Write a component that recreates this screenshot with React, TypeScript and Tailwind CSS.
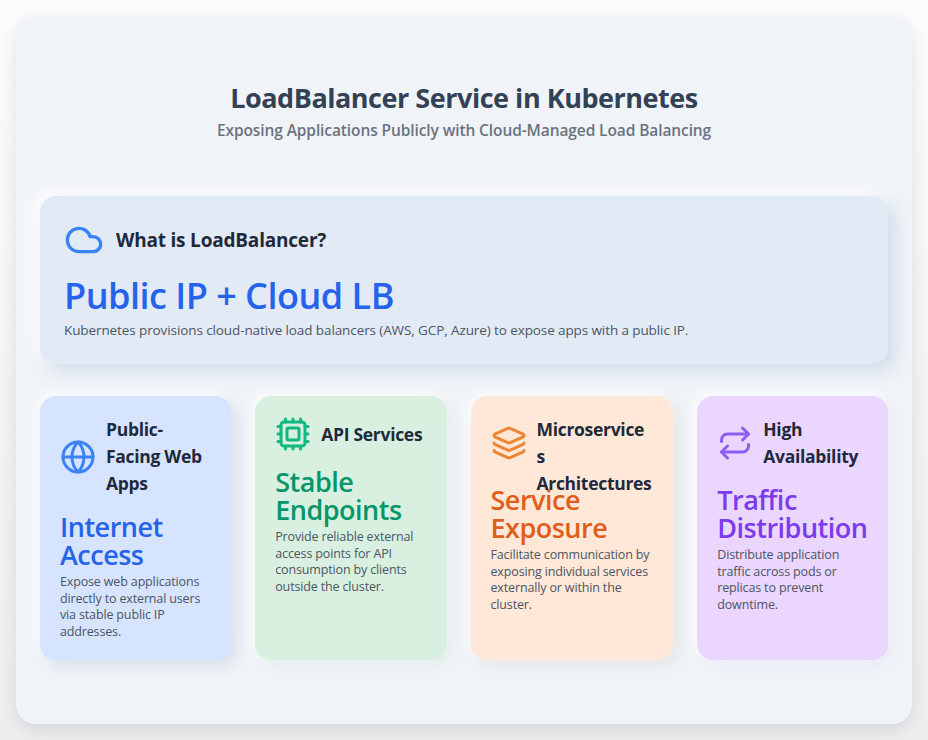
import { Cloud, Cpu, Globe, Layers, Repeat } from "lucide-react";

const cards = [
  {
    icon: <Globe className="h-9 w-9 shrink-0 text-[#3b82f6]" />,
    heading: <>Public-Facing Web Apps</>,
    title: "Internet Access",
    text: "Expose web applications directly to external users via stable public IP addresses.",
    card: "bg-[#d6e4ff] shadow-[6px_6px_14px_rgba(100,130,180,0.18),-4px_-4px_12px_rgba(255,255,255,0.7)]",
    titleColor: "text-[#2563eb]",
    header: "",
    headingAlign: "",
  },
  {
    icon: <Cpu className="h-9 w-9 shrink-0 text-[#10b981]" />,
    heading: <>API Services</>,
    title: "Stable Endpoints",
    text: "Provide reliable external access points for API consumption by clients outside the cluster.",
    card: "bg-[#d9f0e0] shadow-[6px_6px_14px_rgba(120,170,140,0.08),-4px_-4px_12px_rgba(255,255,255,0.7)]",
    titleColor: "text-[#059669]",
    header: "",
    headingAlign: "",
  },
  {
    icon: <Layers className="h-9 w-9 shrink-0 text-[#ee8533]" />,
    heading: (
      <>
        Microservice
        <br />s
        <br />
        Architectures
      </>
    ),
    title: "Service Exposure",
    text: "Facilitate communication by exposing individual services externally or within the cluster.",
    card: "bg-[#ffe8d7] shadow-[6px_6px_14px_rgba(170,140,120,0.12),-4px_-4px_12px_rgba(255,255,255,0.7)]",
    titleColor: "text-[#e05d1c]",
    header: "h-[54px]",
    headingAlign: "self-start",
  },
  {
    icon: <Repeat className="h-9 w-9 shrink-0 text-[#8b5cf6]" />,
    heading: <>High Availability</>,
    title: "Traffic Distribution",
    text: "Distribute application traffic across pods or replicas to prevent downtime.",
    card: "bg-[#ead6ff] shadow-[6px_6px_14px_rgba(150,120,190,0.06),-4px_-4px_12px_rgba(255,255,255,0.7)]",
    titleColor: "text-[#7c3aed]",
    header: "",
    headingAlign: "",
  },
];

export default function App() {
  return (
    <div className="h-[740px] overflow-hidden bg-gradient-to-b from-[#fefbfc] to-[#edeeef] p-4 font-['Open_Sans','Noto_Sans',sans-serif]">
      <div className="h-[708px] rounded-[20px] bg-[#f0f4f8] px-6 pt-[64px] shadow-[0_6px_18px_rgba(0,0,0,0.1)]">
        <div className="text-center">
          <h1 className="text-[27px] leading-[36px] font-bold tracking-[-0.47px] text-[#334155]">
            LoadBalancer Service in Kubernetes
          </h1>
          <p className="mt-0.5 text-[15.5px] leading-[24px] font-semibold tracking-[-0.1px] text-[#6b7280]">
            Exposing Applications Publicly with Cloud-Managed Load Balancing
          </p>
        </div>

        <div className="mt-[54px] h-[168px] rounded-2xl bg-[#e2eaf6] px-6 pt-6 shadow-[8px_8px_16px_rgba(160,180,205,0.35),-8px_-8px_16px_rgba(255,255,255,0.75)]">
          <div className="flex items-center gap-3">
            <Cloud className="h-10 w-10 shrink-0 text-[#3b82f6]" />
            <h2 className="text-[19px] font-bold tracking-[-0.2px] text-[#1e293b]">What is LoadBalancer?</h2>
          </div>
          <div className="mt-[14px] text-[36px] leading-[44px] font-semibold tracking-[-0.5px] text-[#2563eb]">
            Public IP + Cloud LB
          </div>
          <p className="mt-[2px] text-[13.5px] leading-[20px] tracking-[-0.1px] text-[#4b5563]">
            Kubernetes provisions cloud-native load balancers (AWS, GCP, Azure) to expose apps with a public IP.
          </p>
        </div>

        <div className="mt-8 grid h-[264px] grid-cols-[191.25px_191.25px_202.75px_1fr] gap-6">
          {cards.map((c) => (
            <div key={c.title} className={`rounded-2xl p-5 ${c.card}`}>
              <div className={`mb-4 flex items-center gap-2.5 ${c.header}`}>
                {c.icon}
                <h3 className={`min-w-0 text-[17.5px] leading-[27px] font-bold tracking-[-0.3px] text-[#1e293b] ${c.headingAlign}`}>
                  {c.heading}
                </h3>
              </div>
              <div className={`text-[27px] leading-[28px] font-semibold tracking-[-0.5px] ${c.titleColor}`}>
                {c.title}
              </div>
              <p className="mt-[5px] text-[12.5px] leading-[16.5px] tracking-[-0.15px] text-[#4b5563]">{c.text}</p>
            </div>
          ))}
        </div>
      </div>
    </div>
  );
}
